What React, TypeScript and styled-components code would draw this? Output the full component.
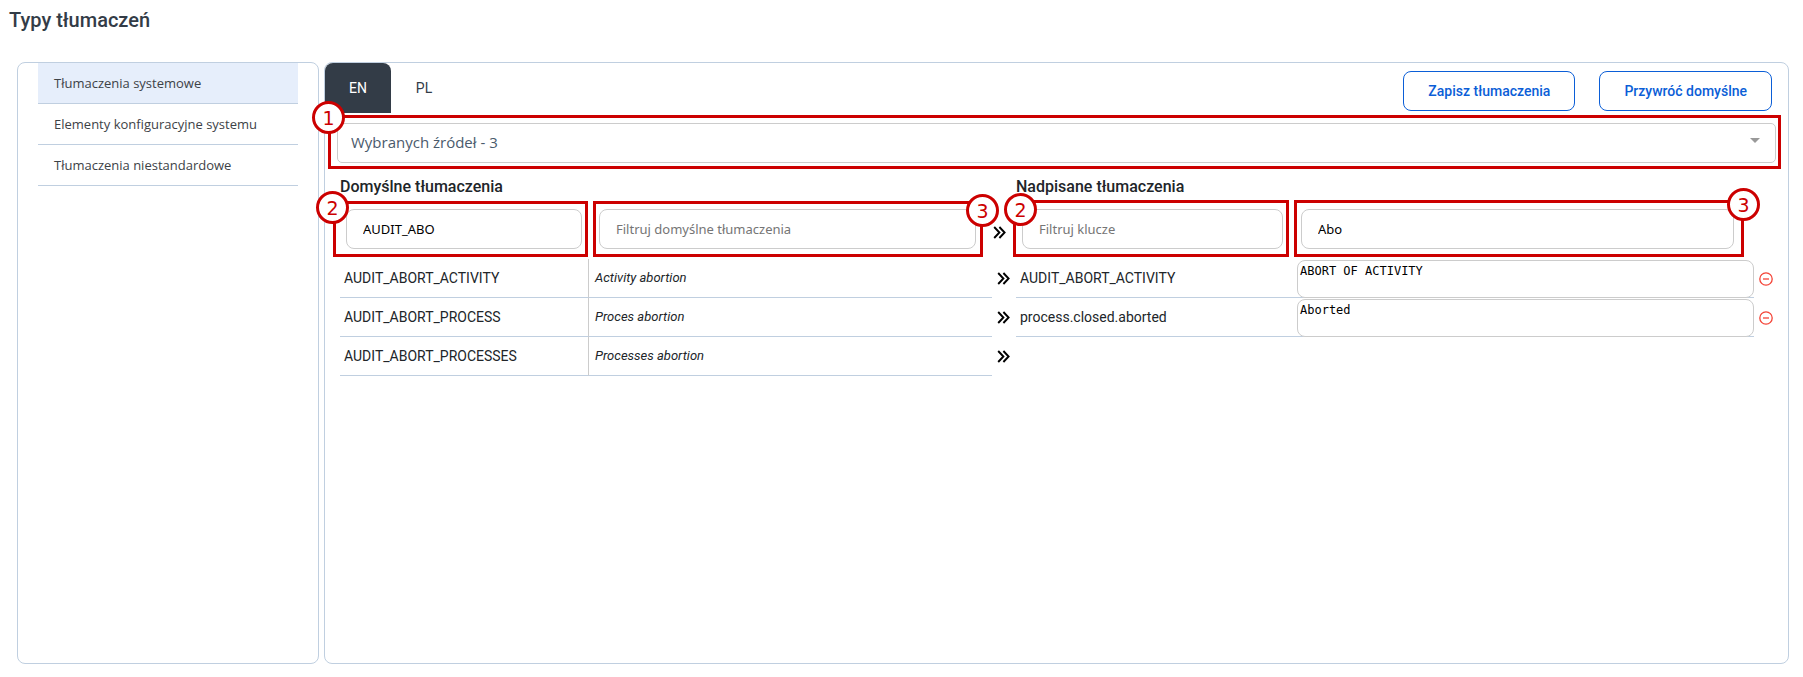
import React, { useState } from 'react';
import styled, { createGlobalStyle, css } from 'styled-components';

const colors = {
  ink: '#212529',
  heading: '#333c47',
  panelBorder: '#c0cfe0',
  fieldBorder: '#cccccc',
  primary: '#0b5ed7',
  mark: '#cc0000',
  danger: '#f44336',
};

const fonts = {
  ui: '"Open Sans", "Noto Sans", sans-serif',
  compact: 'Roboto, "Noto Sans", sans-serif',
  input: '"Noto Sans", "Open Sans", sans-serif',
  mono: '"DejaVu Sans Mono", monospace',
  badge: '"DejaVu Sans", sans-serif',
};

const GlobalStyle = createGlobalStyle`
  *, *::before, *::after { box-sizing: border-box; }
  body {
    margin: 0;
    background: #fff;
    color: ${colors.ink};
    font-family: ${fonts.ui};
  }
`;

const Page = styled.main`
  display: flex;
  flex-direction: column;
  min-height: 100vh;
  padding: 0 14px 13px 17px;
`;

const Title = styled.h1`
  margin: 0 0 22px -8px;
  font-family: ${fonts.compact};
  font-size: 20px;
  font-weight: 500;
  line-height: 40px;
  color: ${colors.heading};
`;

const Columns = styled.div`
  display: flex;
  flex: 1;
  gap: 5px;
`;

const Panel = styled.section`
  border: 1px solid ${colors.panelBorder};
  border-radius: 8px;
  background: #fff;
`;

const SidePanel = styled(Panel)`
  flex: 0 0 302px;
  padding: 0 20px;
`;

const MainPanel = styled(Panel)`
  flex: 1;
  min-width: 0;
`;

const Menu = styled.nav`
  display: flex;
  flex-direction: column;
`;

const MenuLink = styled.a<{ $active?: boolean }>`
  padding: 0 16px;
  border-bottom: 1px solid ${colors.panelBorder};
  background: ${({ $active }) => ($active ? '#e6eefb' : 'transparent')};
  color: #3d4247;
  font-size: 13px;
  line-height: 40px;
  text-decoration: none;
`;

const Toolbar = styled.div`
  display: flex;
  align-items: flex-start;
  justify-content: space-between;
  padding-right: 16px;
`;

const Tabs = styled.div`
  display: flex;
`;

const Tab = styled.button<{ $active: boolean }>`
  min-width: 66px;
  height: 50px;
  padding: 0 24px;
  border: 0;
  border-radius: 8px 8px 0 0;
  background: ${({ $active }) => ($active ? colors.heading : 'transparent')};
  color: ${({ $active }) => ($active ? '#fff' : colors.heading)};
  font-family: ${fonts.compact};
  font-size: 14px;
`;

const Actions = styled.div`
  display: flex;
  gap: 24px;
  padding-top: 8px;
`;

const ActionButton = styled.button`
  height: 40px;
  padding: 0 24px;
  border: 1px solid ${colors.primary};
  border-radius: 8px;
  background: #fff;
  color: ${colors.primary};
  font-family: ${fonts.compact};
  font-size: 14px;
  font-weight: 500;
`;

const SourceField = styled.div`
  position: relative;
  margin: 10px 12px 0;
`;

const SourceSelect = styled.select`
  display: block;
  width: 100%;
  height: 40px;
  padding: 0 13px 2px;
  border: 1px solid ${colors.fieldBorder};
  border-radius: 5px;
  appearance: none;
  background: #fff;
  color: #4a5a6c;
  font-family: ${fonts.ui};
  font-size: 15px;
`;

const SelectArrow = styled.svg`
  position: absolute;
  top: 15px;
  right: 16px;
  width: 10px;
  height: 5px;
  fill: #999;
  pointer-events: none;
`;

type Side = 'left' | 'right';

const CalloutFrame = styled.div<{ $inset: string }>`
  position: absolute;
  inset: ${({ $inset }) => $inset};
  border: 3px solid ${colors.mark};
  pointer-events: none;
`;

const CalloutBadge = styled.span<{ $side: Side; $top: number; $shift: number }>`
  position: absolute;
  z-index: 1;
  top: ${({ $top }) => $top}px;
  ${({ $side, $shift }) => css`${$side}: ${$shift}px;`}
  display: flex;
  align-items: center;
  justify-content: center;
  width: 33px;
  height: 33px;
  border: 3px solid ${colors.mark};
  border-radius: 50%;
  background: #fff;
  color: ${colors.mark};
  font-family: ${fonts.badge};
  font-size: 19px;
  line-height: 20px;
`;

interface CalloutProps {
  number: number;
  inset: string;
  side: Side;
  top: number;
  shift?: number;
}

const Callout = ({ number, inset, side, top, shift = -19 }: CalloutProps) => (
  <CalloutFrame $inset={inset}>
    <CalloutBadge $side={side} $top={top} $shift={shift}>{number}</CalloutBadge>
  </CalloutFrame>
);

const Table = styled.table`
  display: block;
  padding: 0 10px 0 15px;

  thead, tbody { display: block; }
`;

const Row = styled.tr`
  display: grid;
  grid-template-columns: 248fr 404fr 24px 281fr 457fr 24px;
`;

const HeadingCell = styled.th<{ $from: number }>`
  grid-column: ${({ $from }) => $from} / span 2;
  padding: 12px 0 2px;
  text-align: left;
  font-family: ${fonts.compact};
  font-size: 16px;
  font-weight: 500;
  line-height: 24px;
`;

const FilterCell = styled.td<{ $before: number; $after: number }>`
  padding: 8px ${({ $after }) => $after}px 10px ${({ $before }) => $before}px;
`;

const FilterArrowCell = styled.td`
  padding: 25px 0 0 1px;
  line-height: 0;
`;

const FilterField = styled.div`
  position: relative;
`;

const FilterInput = styled.input`
  display: block;
  width: 100%;
  height: 40px;
  padding: 0 16px;
  border: 1px solid ${colors.fieldBorder};
  border-radius: 8px;
  background: #fff;
  color: #000;
  font-family: ${fonts.input};
  font-size: 13px;

  &::placeholder {
    color: #757575;
  }
`;

const DataRow = styled(Row)`
  height: 39px;
`;

const KeyCell = styled.td`
  padding: 0 4px;
  border-bottom: 1px solid ${colors.panelBorder};
  font-family: ${fonts.compact};
  font-size: 14px;
  line-height: 38px;
`;

const DefaultCell = styled(KeyCell)`
  padding: 0 6px;
  border-left: 1px solid ${colors.fieldBorder};
  font-size: 13px;
  font-style: italic;
`;

const OverrideCell = styled.td`
  padding: 1px 0 0;
  border-bottom: 1px solid ${colors.panelBorder};
`;

const IconCell = styled.td`
  display: flex;
  align-items: center;
  justify-content: center;
  padding: 0;
`;

const ArrowCell = styled(IconCell)`
  padding: 0 2px 0 0;
`;

const OverrideText = styled.textarea`
  display: block;
  width: 100%;
  height: 38px;
  margin: 0 0 -1px;
  padding: 3px 2px 2px;
  border: 1px solid ${colors.fieldBorder};
  border-radius: 8px;
  background: #fff;
  color: #000;
  font-family: ${fonts.mono};
  font-size: 12px;
  line-height: 14px;
  resize: none;
`;

const RemoveButton = styled.button`
  display: flex;
  padding: 0;
  border: 0;
  background: none;
  color: ${colors.danger};
`;

const DoubleArrow = () => (
  <svg width="13" height="13" viewBox="0 0 13 13" fill="none" stroke="#000" strokeWidth="1.9" aria-hidden="true">
    <path d="M1.2 1 6.4 6.5 1.2 12M6.4 1l5.2 5.5L6.4 12" />
  </svg>
);

const MinusCircle = () => (
  <svg width="14" height="14" viewBox="0 0 14 14" fill="none" stroke="currentColor" strokeWidth="1.3" aria-hidden="true">
    <circle cx="7" cy="7" r="6.2" />
    <path d="M4 7h6" />
  </svg>
);

interface Translation {
  key: string;
  text: string;
  override?: { key: string; text: string };
}

const menuItems = ['Tłumaczenia systemowe', 'Elementy konfiguracyjne systemu', 'Tłumaczenia niestandardowe'];
const languages = ['EN', 'PL'];
const translations: Translation[] = [
  {
    key: 'AUDIT_ABORT_ACTIVITY',
    text: 'Activity abortion',
    override: { key: 'AUDIT_ABORT_ACTIVITY', text: 'ABORT OF ACTIVITY' },
  },
  {
    key: 'AUDIT_ABORT_PROCESS',
    text: 'Proces abortion',
    override: { key: 'process.closed.aborted', text: 'Aborted' },
  },
  { key: 'AUDIT_ABORT_PROCESSES', text: 'Processes abortion' },
];

export default function App() {
  const [language, setLanguage] = useState('EN');

  return (
    <>
      <GlobalStyle />
      <Page>
        <Title>Typy tłumaczeń</Title>
        <Columns>
          <SidePanel>
            <Menu>
              {menuItems.map((item, index) => (
                <MenuLink key={item} href="#" $active={index === 0}>{item}</MenuLink>
              ))}
            </Menu>
          </SidePanel>
          <MainPanel>
            <Toolbar>
              <Tabs role="tablist">
                {languages.map((name) => (
                  <Tab
                    key={name}
                    type="button"
                    role="tab"
                    aria-selected={language === name}
                    $active={language === name}
                    onClick={() => setLanguage(name)}
                  >
                    {name}
                  </Tab>
                ))}
              </Tabs>
              <Actions>
                <ActionButton type="button">Zapisz tłumaczenia</ActionButton>
                <ActionButton type="button">Przywróć domyślne</ActionButton>
              </Actions>
            </Toolbar>
            <SourceField>
              <SourceSelect aria-label="Wybranych źródeł">
                <option>Wybranych źródeł - 3</option>
              </SourceSelect>
              <SelectArrow viewBox="0 0 10 5" aria-hidden="true">
                <path d="M0 0h10L5 5z" />
              </SelectArrow>
              <Callout number={1} inset="-8px -5px -6px -9px" side="left" top={-17} />
            </SourceField>
            <Table>
              <thead>
                <Row>
                  <HeadingCell colSpan={2} $from={1}>Domyślne tłumaczenia</HeadingCell>
                  <HeadingCell colSpan={2} $from={4}>Nadpisane tłumaczenia</HeadingCell>
                </Row>
                <Row>
                  <FilterCell $before={6} $after={6}>
                    <FilterField>
                      <FilterInput aria-label="Filtruj klucze" defaultValue="AUDIT_ABO" />
                      <Callout number={2} inset="-8px -6px -8px -13px" side="left" top={-13} shift={-20} />
                    </FilterField>
                  </FilterCell>
                  <FilterCell $before={11} $after={16}>
                    <FilterField>
                      <FilterInput aria-label="Filtruj domyślne tłumaczenia" placeholder="Filtruj domyślne tłumaczenia" />
                      <Callout number={3} inset="-8px -7px -8px -6px" side="right" top={-10} />
                    </FilterField>
                  </FilterCell>
                  <FilterArrowCell><DoubleArrow /></FilterArrowCell>
                  <FilterCell $before={6} $after={14}>
                    <FilterField>
                      <FilterInput aria-label="Filtruj klucze" placeholder="Filtruj klucze" />
                      <Callout number={2} inset="-9px -6px -8px -9px" side="left" top={-10} shift={-12} />
                    </FilterField>
                  </FilterCell>
                  <FilterCell $before={4} $after={20}>
                    <FilterField>
                      <FilterInput aria-label="Filtruj nadpisane tłumaczenia" defaultValue="Abo" />
                      <Callout number={3} inset="-9px -10px -8px -7px" side="right" top={-15} />
                    </FilterField>
                  </FilterCell>
                </Row>
              </thead>
              <tbody>
                {translations.map(({ key, text, override }) => (
                  <DataRow key={key}>
                    <KeyCell>{key}</KeyCell>
                    <DefaultCell>{text}</DefaultCell>
                    <ArrowCell><DoubleArrow /></ArrowCell>
                    {override && (
                      <>
                        <KeyCell>{override.key}</KeyCell>
                        <OverrideCell>
                          <OverrideText aria-label={override.key} defaultValue={override.text} />
                        </OverrideCell>
                        <IconCell>
                          <RemoveButton type="button" aria-label="Usuń"><MinusCircle /></RemoveButton>
                        </IconCell>
                      </>
                    )}
                  </DataRow>
                ))}
              </tbody>
            </Table>
          </MainPanel>
        </Columns>
      </Page>
    </>
  );
}
